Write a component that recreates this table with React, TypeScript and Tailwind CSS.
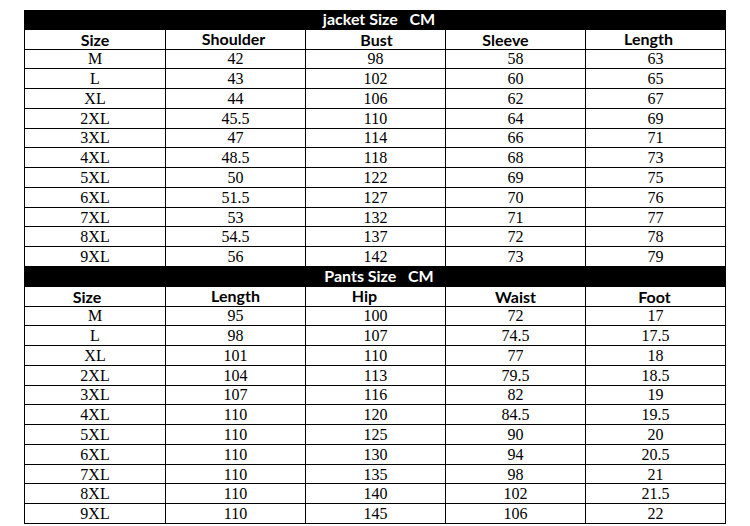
import React from 'react';

type Head = { label: string; cls: string };

const jacketHead: Head[] = [
  { label: 'Size', cls: 'pt-[1px]' },
  { label: 'Shoulder', cls: 'pr-[4px]' },
  { label: 'Bust', cls: 'pt-[2px] pl-[2px]' },
  { label: 'Sleeve', cls: 'pr-[20px] pt-[1px]' },
  { label: 'Length', cls: 'pr-[14px]' },
];

const jacketRows = [
  ['M', '42', '98', '58', '63'],
  ['L', '43', '102', '60', '65'],
  ['XL', '44', '106', '62', '67'],
  ['2XL', '45.5', '110', '64', '69'],
  ['3XL', '47', '114', '66', '71'],
  ['4XL', '48.5', '118', '68', '73'],
  ['5XL', '50', '122', '69', '75'],
  ['6XL', '51.5', '127', '70', '76'],
  ['7XL', '53', '132', '71', '77'],
  ['8XL', '54.5', '137', '72', '78'],
  ['9XL', '56', '142', '73', '79'],
];

const pantsHead: Head[] = [
  { label: 'Size', cls: 'pr-[16px] pt-[1px]' },
  { label: 'Length', cls: '' },
  { label: 'Hip', cls: 'pr-[22px]' },
  { label: 'Waist', cls: 'pt-[2px]' },
  { label: 'Foot', cls: 'pt-[1px] pr-[2px]' },
];

const pantsRows = [
  ['M', '95', '100', '72', '17'],
  ['L', '98', '107', '74.5', '17.5'],
  ['XL', '101', '110', '77', '18'],
  ['2XL', '104', '113', '79.5', '18.5'],
  ['3XL', '107', '116', '82', '19'],
  ['4XL', '110', '120', '84.5', '19.5'],
  ['5XL', '110', '125', '90', '20'],
  ['6XL', '110', '130', '94', '20.5'],
  ['7XL', '110', '135', '98', '21'],
  ['8XL', '110', '140', '102', '21.5'],
  ['9XL', '110', '145', '106', '22'],
];

const Section: React.FC<{ title: string; head: Head[]; rows: string[][] }> = ({ title, head, rows }) => (
  <>
    <div className="col-span-5 bg-black border-r border-b border-black flex items-center justify-center">
      <span className="whitespace-pre text-white font-bold text-[16px] font-['Lato','Liberation_Sans',sans-serif] leading-none pl-[8px]">
        {title}
      </span>
    </div>
    {head.map(h => (
      <div
        key={h.label}
        className={`border-r border-b border-black flex items-center justify-center text-[16px] font-bold text-black leading-none font-['Lato','Liberation_Sans',sans-serif] ${h.cls}`}
      >
        {h.label}
      </div>
    ))}
    {rows.map(r =>
      r.map((v, i) => (
        <div
          key={r[0] + i}
          className="border-r border-b border-black flex items-center justify-center text-[16px] text-black leading-none font-['Liberation_Serif',serif] pt-[1px]"
        >
          {v}
        </div>
      ))
    )}
  </>
);

export default function App() {
  return (
    <div className="w-[750px] h-[526px] bg-white pt-[10px] pl-[24px] overflow-hidden">
      <div className="w-[702px] h-[514px] border-l border-black grid grid-cols-[141px_140px_140px_140px_140px] grid-rows-[repeat(26,minmax(0,1fr))]">
        <Section title="jacket Size   CM" head={jacketHead} rows={jacketRows} />
        <Section title="Pants Size   CM" head={pantsHead} rows={pantsRows} />
      </div>
    </div>
  );
}
